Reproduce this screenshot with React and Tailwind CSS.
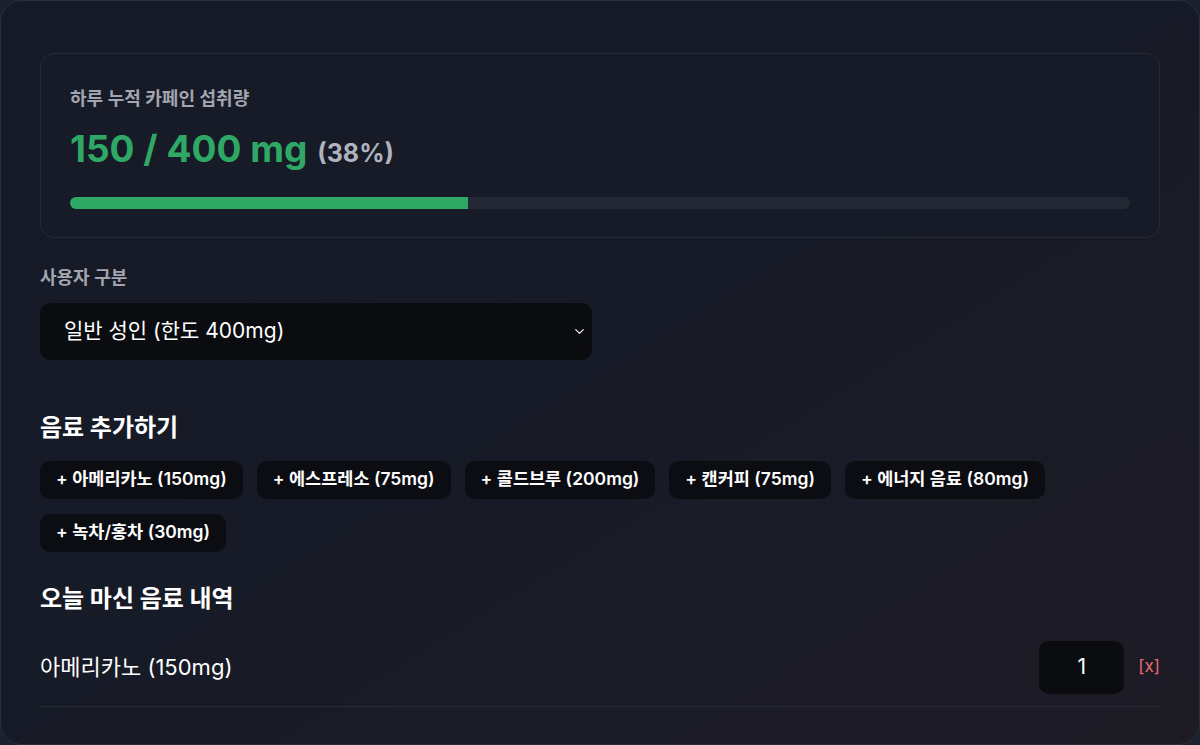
import { ChevronDown } from 'lucide-react';

const drinks = [
  { name: '아메리카노', mg: 150 },
  { name: '에스프레소', mg: 75 },
  { name: '콜드브루', mg: 200 },
  { name: '캔커피', mg: 75 },
  { name: '에너지 음료', mg: 80 },
  { name: '녹차/홍차', mg: 30 },
];

export default function App() {
  const total = 150;
  const limit = 400;
  const pct = Math.round((total / limit) * 100);

  return (
    <div
      className="min-h-[745px] w-[1200px] bg-[#1c2130] text-white"
      style={{ fontFamily: 'Inter, "Noto Sans CJK KR", sans-serif' }}
    >
      <div className="h-[745px] rounded-[22px] border border-[#2a2f3d] bg-gradient-to-br from-[#151a26] via-[#171b27] to-[#1e1b25] px-[39px] pt-[52px]">
        {/* Summary */}
        <div className="rounded-[14px] border border-[#262b38] bg-[#171b27] px-[29px] pt-[32px] pb-[28px]">
          <p className="text-[18px] leading-[26px] font-semibold text-[#a3a6b0]">하루 누적 카페인 섭취량</p>
          <div className="mt-[14px] flex items-baseline gap-[10px]">
            <span className="text-[37px] font-bold leading-[46px] text-[#2fa866]">
              {total} / {limit} mg
            </span>
            <span className="text-[25px] font-bold text-[#b0b3bd]">({pct}%)</span>
          </div>
          <div className="mt-[24px] h-[12px] w-full overflow-hidden rounded-full bg-[#242834]">
            <div className="h-full bg-[#2fa866]" style={{ width: `${(total / limit) * 100}%` }} />
          </div>
        </div>

        {/* User type */}
        <p className="mt-[26px] text-[18px] leading-[27px] font-semibold text-[#a3a6b0]">사용자 구분</p>
        <div className="mt-[12px] flex h-[57px] w-[552px] items-center justify-between rounded-[10px] bg-[#0b0c10] pl-[24px] pr-[5px]">
          <span className="text-[21px]">일반 성인 (한도 400mg)</span>
          <ChevronDown className="h-[15px] w-[15px] text-white" strokeWidth={1.8} />
        </div>

        {/* Add drinks */}
        <h2 className="mt-[52px] text-[24px] leading-[32px] font-bold">음료 추가하기</h2>
        <div className="mt-[17px] flex flex-wrap gap-x-[14px] gap-y-[15px]">
          {drinks.map((d) => (
            <button
              key={d.name}
              className="h-[38px] rounded-[10px] bg-[#0c0d12] px-[16px] text-[17.5px] font-semibold text-white"
            >
              + {d.name} ({d.mg}mg)
            </button>
          ))}
        </div>

        {/* History */}
        <h2 className="mt-[31px] text-[24px] leading-[32px] font-bold">오늘 마신 음료 내역</h2>
        <div className="mt-[26px] flex items-center justify-between border-b border-[#262a35] pb-[12px]">
          <span className="text-[22px]">아메리카노 (150mg)</span>
          <div className="flex items-center gap-[14px]">
            <div className="flex h-[53px] w-[85px] items-center justify-center rounded-[10px] bg-[#0b0c10] text-[21px]">
              1
            </div>
            <span className="text-[17px] text-[#e86e6e]">[x]</span>
          </div>
        </div>
      </div>
    </div>
  );
}
